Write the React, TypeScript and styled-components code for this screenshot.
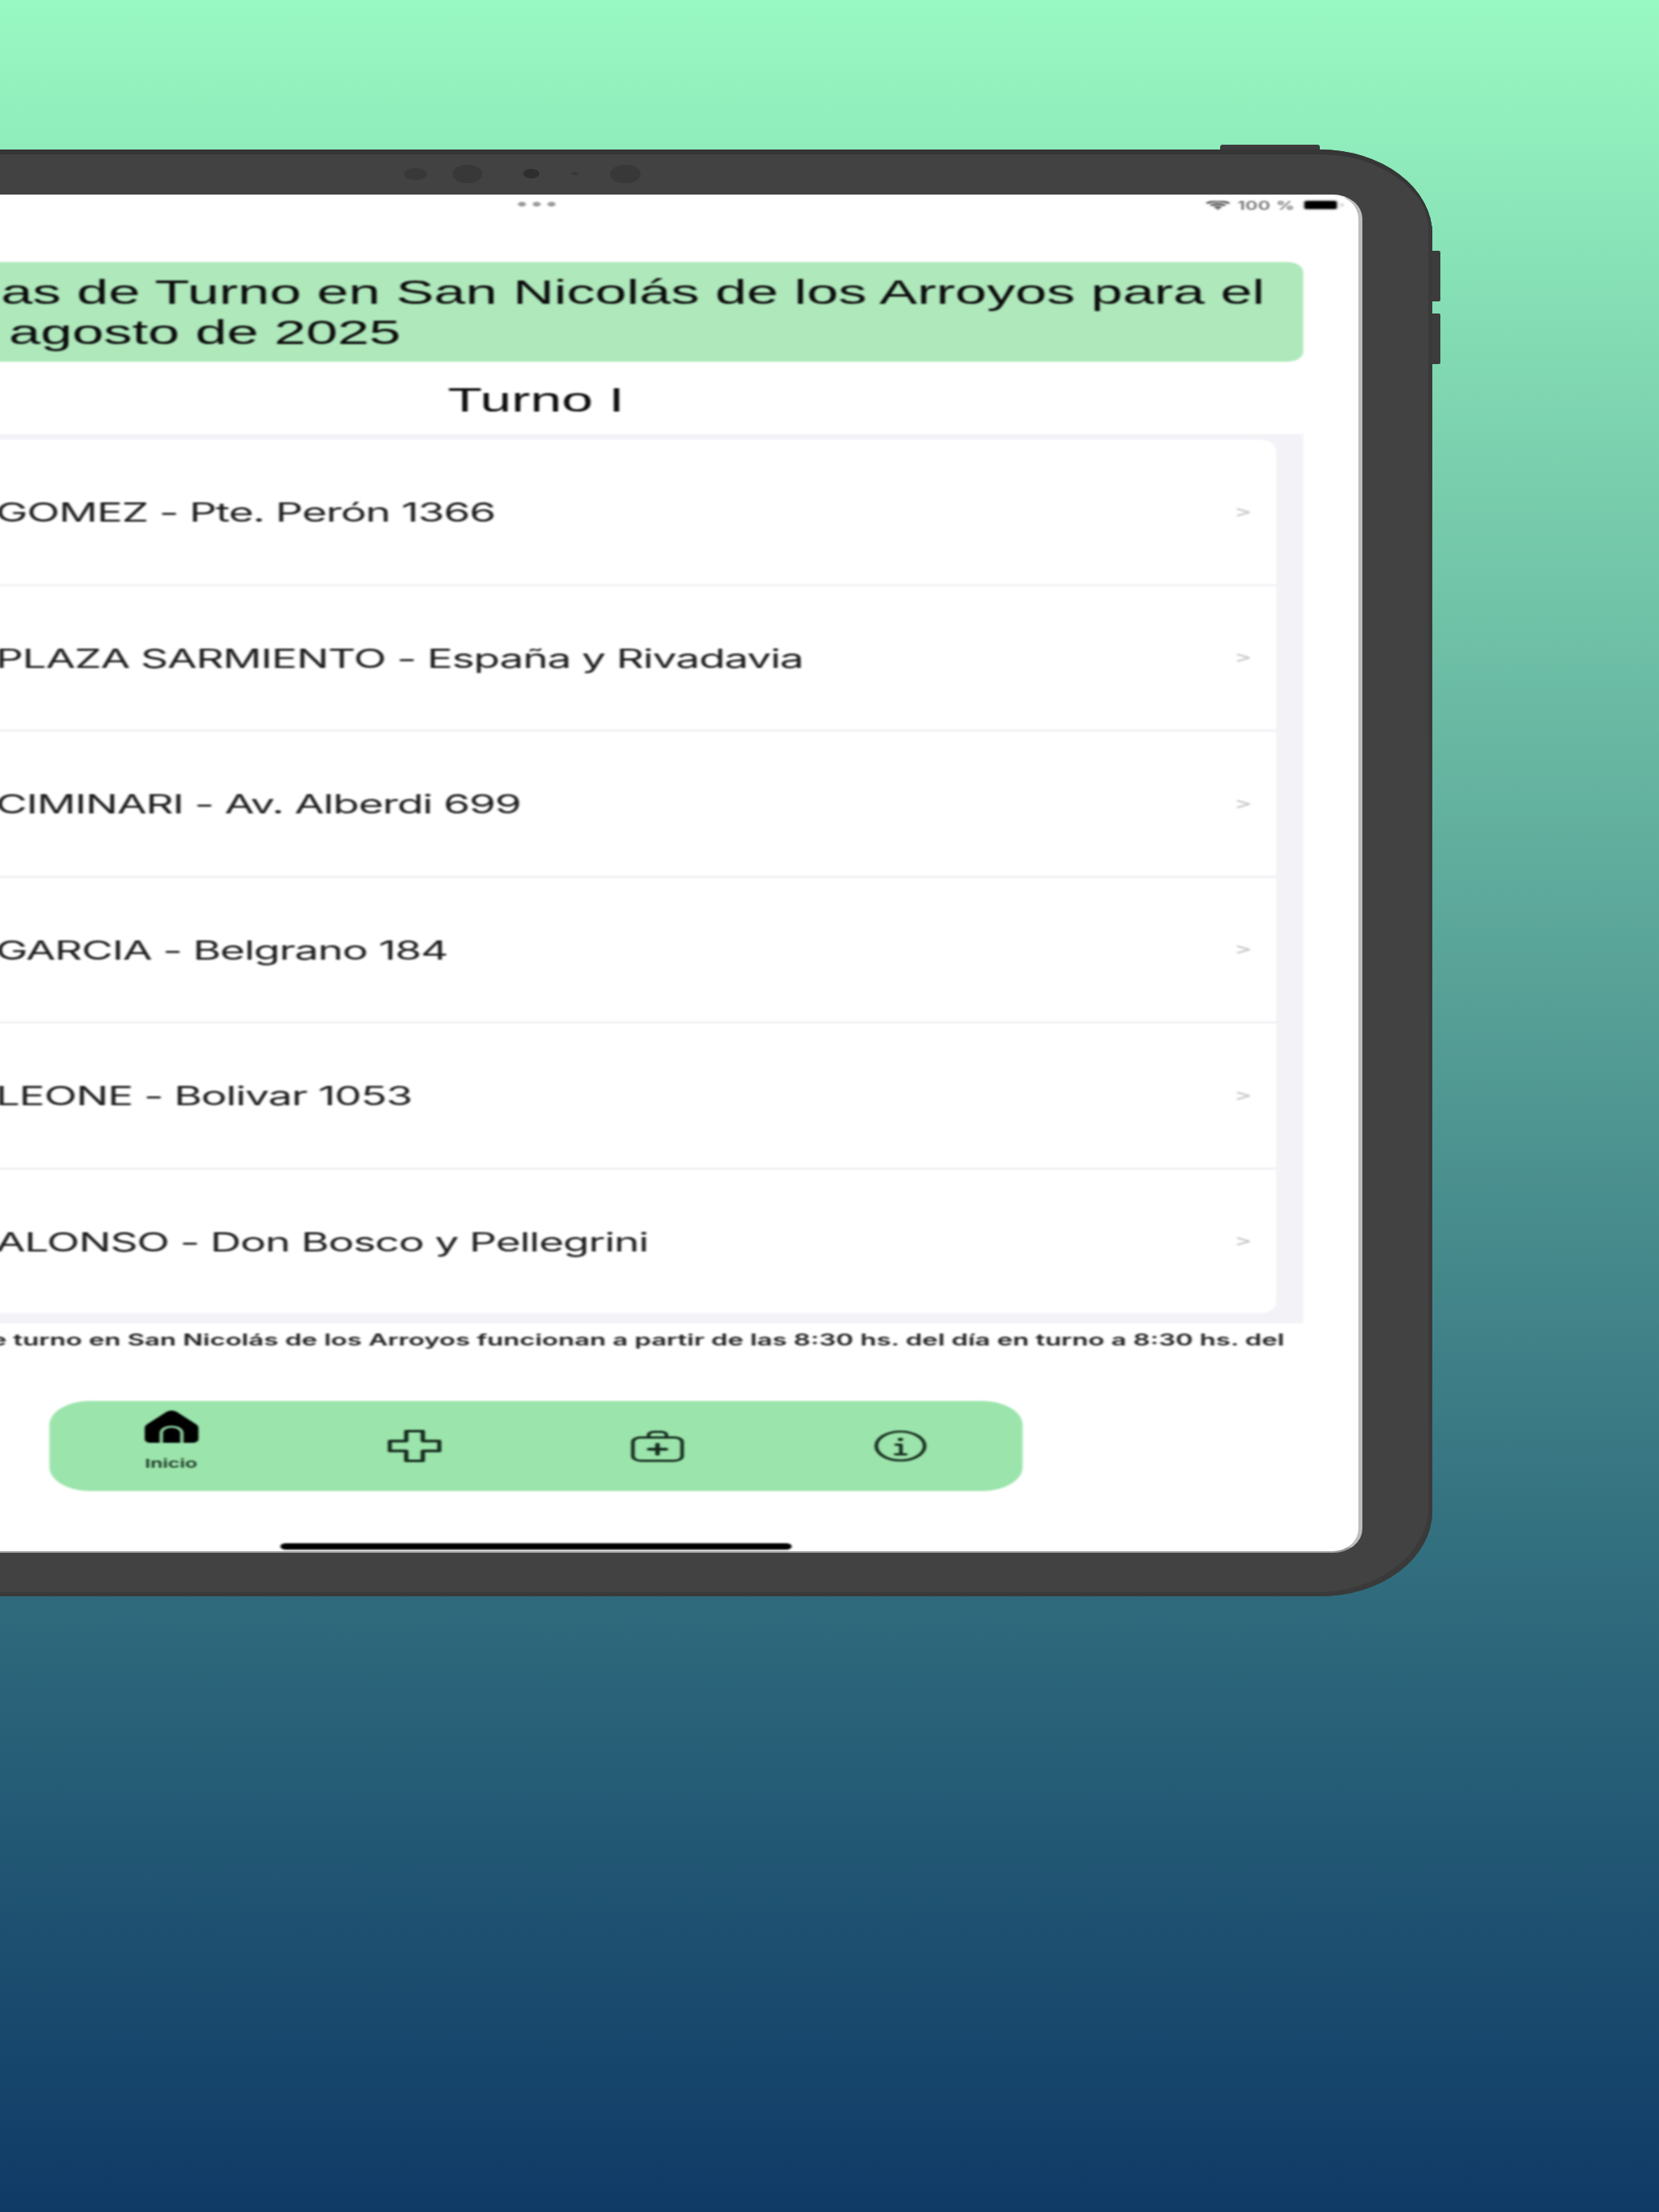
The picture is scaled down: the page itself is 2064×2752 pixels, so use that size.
import React from "react";
import styled, { createGlobalStyle } from "styled-components";

const Global = createGlobalStyle`
  html, body { margin: 0; padding: 0; }
  body {
    width: 2064px;
    height: 2752px;
    overflow: hidden;
    background: linear-gradient(180deg, #99f9c2 0%, #2f6b7d 72%, #0f3a66 100%);
  }
`;

const Device = styled.div`
  position: relative;
  box-sizing: border-box;
  width: 2228px;
  height: 1800px;
  margin: 186px 0 0 -446px;
  padding: 0 87px 54px 85px;
  display: flex;
  flex-direction: column;
  background: #424242;
  border-radius: 140px / 106px;
  box-shadow: inset 0 6px 0 #363636, inset -5px -5px 0 #3a3a3a;
`;

const SideButton = styled.div<{ $top: number }>`
  position: absolute;
  right: -10px;
  top: ${(p) => p.$top}px;
  width: 10px;
  height: 63px;
  background: #3c3c3c;
  border-radius: 0 2px 2px 0;
`;

const TopButton = styled.div`
  position: absolute;
  top: -6px;
  left: 1964px;
  width: 124px;
  height: 6px;
  background: #3c3c3c;
  border-radius: 3px 3px 0 0;
`;

const CameraBar = styled.div`
  height: 56px;
  flex: none;
  display: flex;
  align-items: center;
  justify-content: center;
  padding-right: 34px;
  padding-top: 4px;
  box-sizing: border-box;
`;

const Lens = styled.span<{ $w: number; $h: number; $gap: number; $dark?: boolean }>`
  width: ${(p) => p.$w}px;
  height: ${(p) => p.$h}px;
  margin-left: ${(p) => p.$gap}px;
  border-radius: 50%;
  background: ${(p) => (p.$dark ? "#2e2e2e" : "#383838")};
`;

const Screen = styled.div`
  flex: 1;
  min-height: 0;
  overflow: hidden;
  box-sizing: border-box;
  background: #fff;
  border-radius: 37px / 30px;
  border-top: 1px solid #e8e8e8;
  border-right: 5px solid #bdbdbd;
  border-bottom: 2px solid #9a9a9a;
`;

/* The picture is a phone capture stretched sideways: the page is laid out at
   its natural width and the whole of it is widened once. */
const Content = styled.div`
  width: 1231px;
  height: 1687px;
  display: flex;
  flex-direction: column;
  transform: scaleX(1.67);
  transform-origin: left top;
  filter: blur(0.8px);
  color: #111;
  font-family: Inter, "Liberation Sans", sans-serif;
`;

const StatusBar = styled.div`
  flex: none;
  height: 24px;
  position: relative;
  display: flex;
  align-items: center;
  justify-content: flex-end;
  gap: 5px;
  padding-right: 19px;
  color: #5a5a5a;
`;

const Dots = styled.div`
  position: absolute;
  left: 602px;
  top: 8px;
  display: flex;
  gap: 5px;
`;

const Dot = styled.span`
  width: 6px;
  height: 6px;
  border-radius: 50%;
  background: #999;
`;

const Percent = styled.span`
  font-size: 14px;
  font-weight: 500;
  letter-spacing: 0.3px;
`;

const Battery = styled.span`
  position: relative;
  width: 24px;
  height: 10px;
  margin-left: 2px;
  background: #000;
  border-radius: 2px;
  box-shadow: 0 0 0 1.5px #d0d0d0;
  &::after {
    content: "";
    position: absolute;
    right: -5px;
    top: 3px;
    width: 2px;
    height: 4px;
    background: #d0d0d0;
  }
`;

const Banner = styled.div`
  flex: none;
  height: 124px;
  box-sizing: border-box;
  margin: 59px 44px 0;
  padding: 2px 20px 0;
  display: flex;
  align-items: center;
  white-space: nowrap;
  background: #aee8bb;
  border-radius: 12px;
  font-family: "Liberation Sans", Arial, sans-serif;
  font-size: 42.35px;
  line-height: 50px;
  color: #0c0c0c;
`;

const BannerLine = styled.span<{ $shift?: number }>`
  display: block;
  margin-left: ${(p) => p.$shift ?? 0}px;
`;

const Title = styled.h1`
  flex: none;
  height: 90px;
  margin: 0;
  padding-top: 6px;
  box-sizing: border-box;
  display: flex;
  align-items: center;
  justify-content: center;
  font-family: "Liberation Sans", Arial, sans-serif;
  font-size: 42px;
  font-weight: 400;
  color: #0c0c0c;
`;

const ListWrap = styled.div`
  flex: none;
  height: 1106px;
  box-sizing: border-box;
  margin: 0 44px;
  padding: 7px 20px 12px;
  background: #f2f2f7;
`;

const Card = styled.div`
  height: 100%;
  background: #fff;
  border-radius: 12px / 14px;
  overflow: hidden;
  display: flex;
  flex-direction: column;
`;

const Row = styled.div`
  flex: 1;
  min-height: 0;
  box-sizing: border-box;
  display: flex;
  align-items: center;
  justify-content: space-between;
  padding: 0 18px 0 149px;
  border-bottom: 2px solid #ececf1;
  &:last-child { border-bottom: 0; }
`;

const RowText = styled.span`
  margin-top: 2px;
  font-size: 32px;
  letter-spacing: -0.64px;
  color: #1c1c1e;
`;

const Chevron = styled.span`
  font-size: 20px;
  font-weight: 500;
  margin-top: -2px;
  color: #c6c6c8;
`;

const Note = styled.p`
  flex: none;
  height: 97px;
  margin: 0;
  padding: 0 58px 0 0;
  box-sizing: border-box;
  text-align: right;
  white-space: nowrap;
  font-size: 19.8px;
  font-weight: 600;
  line-height: 42px;
  color: #222;
`;

const NavBar = styled.nav`
  flex: none;
  width: 725px;
  height: 112px;
  margin: 0 auto;
  display: flex;
  background: #9be4ab;
  border-radius: 30px;
`;

const Tab = styled.div<{ $active?: boolean }>`
  flex: 1;
  display: flex;
  flex-direction: column;
  align-items: center;
  justify-content: ${(p) => (p.$active ? "flex-start" : "center")};
  padding-top: ${(p) => (p.$active ? "12px" : "0")};
  gap: 17px;
`;

const TabLabel = styled.span`
  font-size: 15px;
  font-weight: 600;
  line-height: 17px;
  color: #1a3322;
`;

const HomeBar = styled.div`
  flex: none;
  width: 381px;
  height: 8px;
  margin: 65px auto 0;
  background: #000;
  border-radius: 4px;
`;

const TabIcon = styled.svg`
  width: 40px;
  height: 40px;
  flex: none;
  fill: none;
  stroke: #14291c;
  stroke-width: 1.6;
  stroke-linecap: round;
  stroke-linejoin: round;
`;

const WifiIcon = styled.svg`
  width: 19px;
  height: 11px;
  fill: none;
  stroke: #444;
  stroke-width: 2.1;
`;

const rows = [
  "GOMEZ - Pte. Perón 1366",
  "PLAZA SARMIENTO - España y Rivadavia",
  "CIMINARI - Av. Alberdi 699",
  "GARCIA - Belgrano 184",
  "LEONE - Bolivar 1053",
  "ALONSO - Don Bosco y Pellegrini",
];

export default function App() {
  return (
    <>
      <Global />
      <Device>
        <TopButton />
        <SideButton $top={126} />
        <SideButton $top={204} />
        <CameraBar>
          <Lens $w={28} $h={15} $gap={0} />
          <Lens $w={37} $h={23} $gap={32} />
          <Lens $w={20} $h={12} $gap={51} $dark />
          <Lens $w={8} $h={4} $gap={40} />
          <Lens $w={38} $h={23} $gap={40} />
        </CameraBar>
        <Screen>
          <Content>
            <StatusBar>
              <Dots>
                <Dot />
                <Dot />
                <Dot />
              </Dots>
              <WifiIcon viewBox="0 0 19 11">
                <path d="M1 3C6 -0.4 13 -0.4 18 3" />
                <path d="M4 5.6C7.5 3.4 11.5 3.4 15 5.6" />
                <path d="M7 8.2C8.6 7.2 10.4 7.2 12 8.2" />
                <circle cx="9.5" cy="10" r="1" fill="#444" stroke="none" />
              </WifiIcon>
              <Percent>100 %</Percent>
              <Battery />
            </StatusBar>
            <Banner>
              <div>
                <BannerLine>Farmacias de Turno en San Nicolás de los Arroyos para el</BannerLine>
                <BannerLine $shift={-6}>día 1 de agosto de 2025</BannerLine>
              </div>
            </Banner>
            <Title>Turno I</Title>
            <ListWrap>
              <Card>
                {rows.map((r) => (
                  <Row key={r}>
                    <RowText>{r}</RowText>
                    <Chevron>&gt;</Chevron>
                  </Row>
                ))}
              </Card>
            </ListWrap>
            <Note>
              Las farmacias de turno en San Nicolás de los Arroyos funcionan a partir de las 8:30 hs. del día en
              turno a 8:30 hs. del
            </Note>
            <NavBar>
              <Tab $active>
                <TabIcon viewBox="0 0 24 24" style={{ stroke: "none" }}>
                  <path
                    fill="#000"
                    d="M12 0C12.9 0 13.7 0.4 14.4 1.1L22.4 9.6C23.5 10.7 24 11.6 24 13V21C24 23 23 24 21 24H3C1 24 0 23 0 21V13C0 11.6 0.5 10.7 1.6 9.6L9.6 1.1C10.3 0.4 11.1 0 12 0Z"
                  />
                  <path
                    fill="none"
                    stroke="#8fd4a0"
                    strokeWidth="1.5"
                    d="M7.4 24V17C7.4 14 9.2 12 12 12C14.8 12 16.6 14 16.6 17V24"
                  />
                </TabIcon>
                <TabLabel>Inicio</TabLabel>
              </Tab>
              <Tab>
                <TabIcon viewBox="0 0 24 24" style={{ strokeWidth: 1.9 }}>
                  <path d="M8.3 0.9H15.7V8.3H23.1V15.7H15.7V23.1H8.3V15.7H0.9V8.3H8.3Z" />
                </TabIcon>
              </Tab>
              <Tab>
                <TabIcon viewBox="0 0 24 24">
                  <rect x="1" y="5.6" width="22" height="17.4" rx="3.5" />
                  <path d="M8 5.6V3.8C8 2.4 9 1.4 10.4 1.4H13.6C15 1.4 16 2.4 16 3.8V5.6" />
                  <path d="M12 10.6V18.2M8.2 14.4H15.8" strokeWidth="2" />
                </TabIcon>
              </Tab>
              <Tab>
                <TabIcon viewBox="0 0 24 24">
                  <circle cx="12" cy="12" r="10.8" />
                  <circle cx="12" cy="7" r="1.2" fill="#14291c" stroke="none" />
                  <path d="M10 11H12.2V18M9.8 18.2H14.4" />
                </TabIcon>
              </Tab>
            </NavBar>
            <HomeBar />
          </Content>
        </Screen>
      </Device>
    </>
  );
}
